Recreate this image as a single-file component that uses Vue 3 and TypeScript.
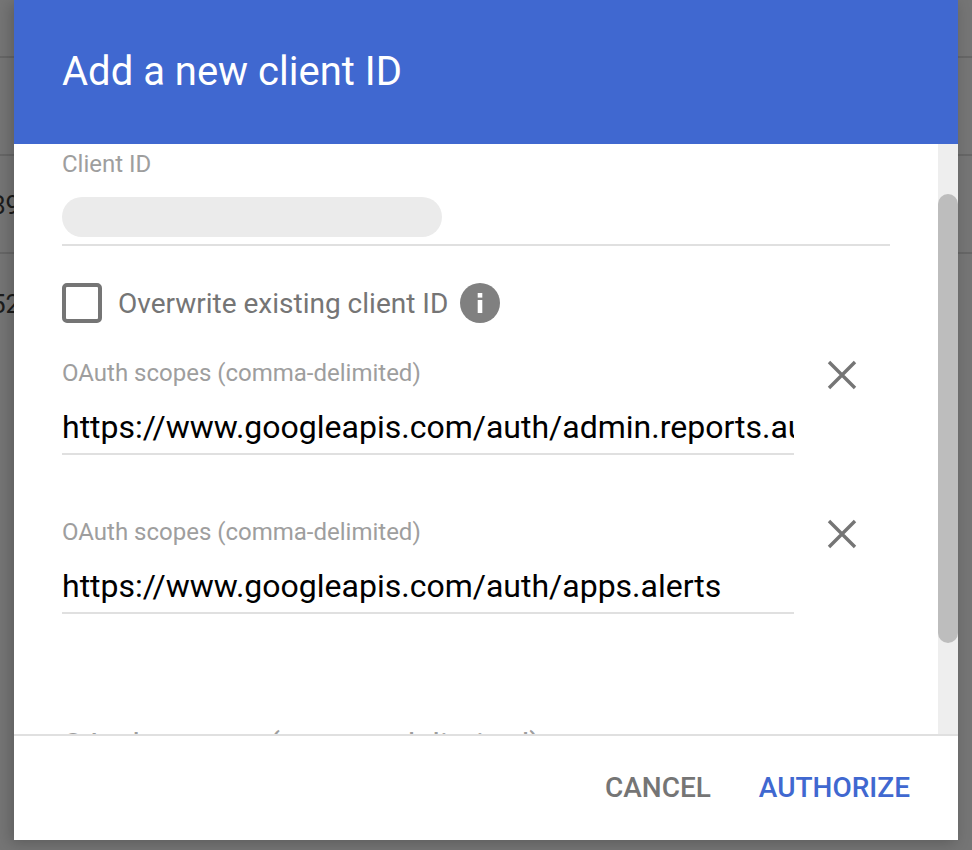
<script setup lang="ts">
const scopes: string[] = [
  'https://www.googleapis.com/auth/admin.reports.audit.readonly',
  'https://www.googleapis.com/auth/apps.alerts',
]
</script>

<template>
  <div class="page">
    <div class="backdrop">
      <div class="row first"></div>
      <div class="row second"></div>
      <div class="row"><span class="frag">89</span></div>
      <div class="row last"><span class="frag">52</span></div>
    </div>
    <div class="dialog">
      <header class="head">Add a new client ID</header>
      <div class="main">
        <div class="content">
          <div class="label client-label">Client ID</div>
          <div class="client-field"><div class="redact"></div></div>
          <div class="check-row">
            <span class="check"></span>
            <span class="check-text">Overwrite existing client ID</span>
            <svg class="info" width="40" height="40" viewBox="0 0 40 40">
              <circle cx="20" cy="20" r="20" fill="#808080" />
              <rect x="17.7" y="17" width="4.6" height="13" fill="#fff" />
              <rect x="17.7" y="10" width="4.6" height="4.6" fill="#fff" />
            </svg>
          </div>
          <div v-for="scope in scopes" :key="scope" class="scope">
            <div class="scope-field">
              <div class="label">OAuth scopes (comma-delimited)</div>
              <div class="scope-value">{{ scope }}</div>
            </div>
            <svg class="close" width="32" height="32" viewBox="0 0 32 32">
              <path d="M3 3 L29 29 M29 3 L3 29" stroke="#757575" stroke-width="3.4" fill="none" />
            </svg>
          </div>
          <div class="label next-label">OAuth scopes (comma-delimited)</div>
        </div>
        <div class="track"><div class="thumb"></div></div>
      </div>
      <footer class="foot">
        <span class="btn cancel">CANCEL</span>
        <span class="btn authorize">AUTHORIZE</span>
      </footer>
    </div>
  </div>
</template>

<style>
html, body { margin: 0; padding: 0; background: #666; }
</style>

<style scoped>
.page {
  position: relative;
  width: 972px;
  height: 850px;
  overflow: hidden;
  background: #757575;
  font-family: Roboto, "Liberation Sans", sans-serif;
}
.backdrop { display: flex; flex-direction: column; }
.row {
  box-sizing: border-box;
  height: 98px;
  border-bottom: 2px solid #666;
  display: flex;
  align-items: center;
  padding-top: 2px;
  font-size: 26px;
  color: #1c1c1c;
}
.row.first { height: 58px; }
.row.last { border-bottom: none; }
.frag { margin-left: -9px; }
.dialog {
  position: absolute;
  left: 14px;
  top: 0;
  width: 944px;
  height: 840px;
  background: #fff;
  display: flex;
  flex-direction: column;
  box-shadow: -3px 3px 14px rgba(0, 0, 0, 0.22);
}
.head {
  height: 144px;
  flex: none;
  box-sizing: border-box;
  background: #4068d0;
  color: #fff;
  font-size: 40px;
  line-height: 144px;
  padding-left: 48px;
}
.main {
  flex: 1;
  display: flex;
  min-height: 0;
  overflow: hidden;
}
.content {
  flex: 1;
  min-width: 0;
  padding: 6px 48px 0 48px;
  overflow: hidden;
}
.label {
  color: #9e9e9e;
  font-size: 24px;
  line-height: 28px;
  white-space: nowrap;
}
.client-field {
  margin-top: 19px;
  padding-bottom: 7px;
  border-bottom: 2px solid #e0e0e0;
}
.redact {
  width: 380px;
  height: 40px;
  border-radius: 20px;
  background: #ebebeb;
}
.check-row {
  display: flex;
  align-items: center;
  margin-top: 37px;
}
.check {
  box-sizing: border-box;
  width: 40px;
  height: 40px;
  border: 4px solid #757575;
  border-radius: 5px;
}
.check-text {
  margin-left: 16px;
  font-size: 28px;
  color: #757575;
}
.info { margin-left: 12px; }
.scope {
  display: flex;
  align-items: flex-start;
  margin-top: 36px;
  margin-bottom: 63px;
}
.scope + .scope { margin-top: 0; }
.scope-field { width: 732px; }
.scope-value {
  margin-top: 21px;
  padding-bottom: 7px;
  border-bottom: 2px solid #e0e0e0;
  font-size: 32px;
  line-height: 38px;
  color: #000;
  white-space: nowrap;
  overflow: hidden;
}
.close { margin-left: 32px; margin-top: 0; }
.next-label {
  margin-top: 111px;
  font-size: 32px;
  line-height: 38px;
}
.track {
  width: 20px;
  flex: none;
  background: #eee;
  padding-top: 50px;
}
.thumb {
  width: 20px;
  height: 449px;
  border-radius: 10px;
  background: #bdbdbd;
}
.foot {
  flex: none;
  height: 106px;
  box-sizing: border-box;
  background: #fff;
  border-top: 2px solid #e0e0e0;
  display: flex;
  align-items: center;
  justify-content: flex-end;
  gap: 48px;
  padding-right: 48px;
  padding-bottom: 2px;
  font-size: 28px;
  font-weight: 500;
}
.cancel { color: #757575; }
.authorize { color: #4068d0; }
</style>
